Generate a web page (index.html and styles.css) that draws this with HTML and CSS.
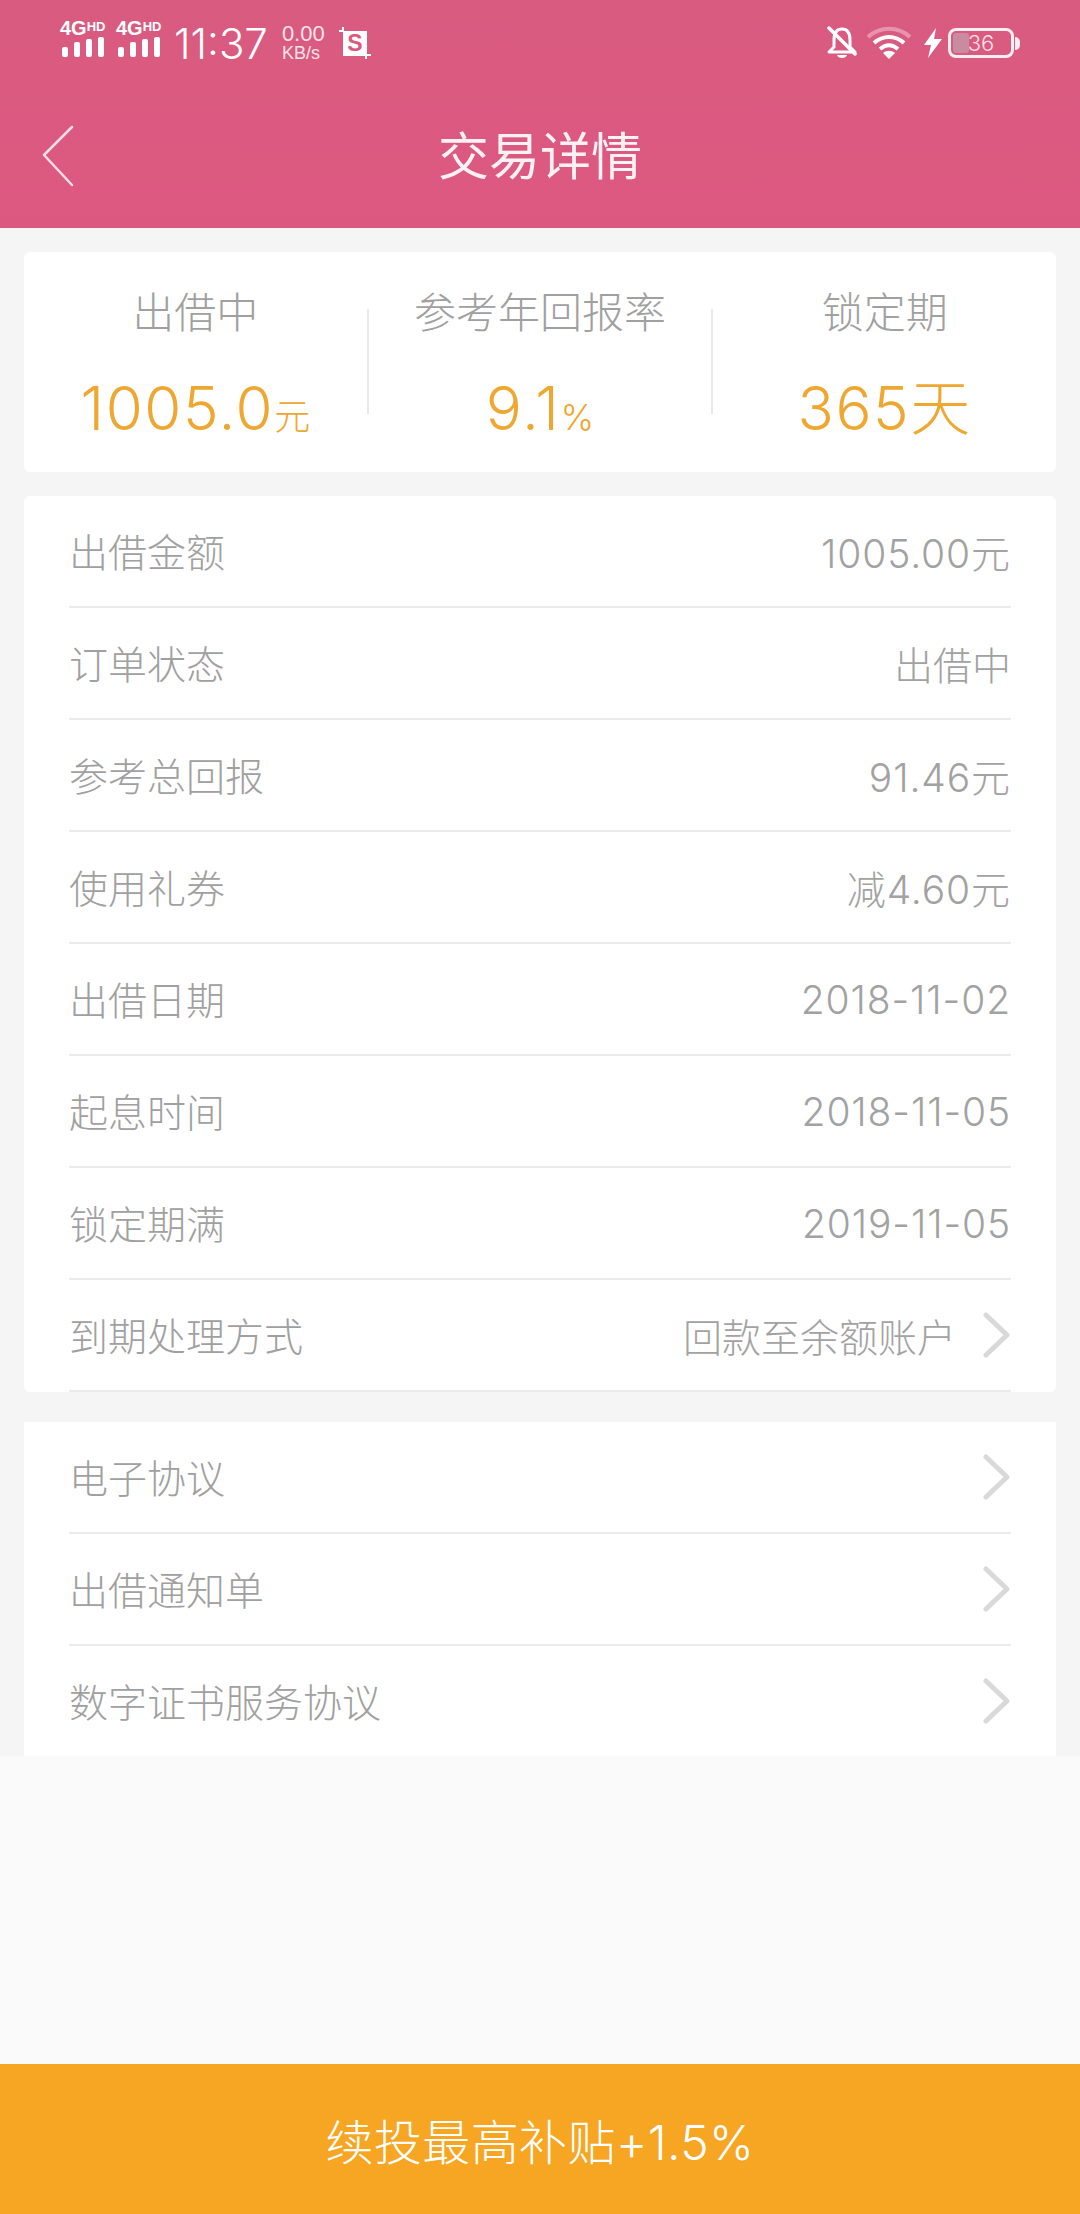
FILE: index.html
```html
<!DOCTYPE html>
<html lang="zh-CN">
<head>
  <meta charset="UTF-8" />
  <meta name="viewport" content="width=device-width, initial-scale=1.0" />
  <title>交易详情</title>
  <link rel="stylesheet" href="styles.css">
</head>
<body>
  <div class="page">
    <header class="header">
      <div class="status-bar">
        <div class="status-left">
          <div class="signal">
            <div class="signal-label">4G<span>HD</span></div>
            <div class="signal-bars"><i class="b1"></i><i class="b2"></i><i class="b3"></i><i class="b4"></i></div>
          </div>
          <div class="signal">
            <div class="signal-label">4G<span>HD</span></div>
            <div class="signal-bars"><i class="b1"></i><i class="b2"></i><i class="b3"></i><i class="b4"></i></div>
          </div>
          <div class="clock">11:37</div>
          <div class="speed"><div>0.00</div><div class="speed-unit">KB/s</div></div>
          <div class="shot-icon">
            <svg width="32" height="34" viewBox="0 0 32 34">
              <path d="M4 1 L4 5 L0 5" fill="none" stroke="#fff" stroke-width="2"/>
              <path d="M27 29 L32 29 M27 29 L27 33" fill="none" stroke="#fff" stroke-width="2"/>
              <rect x="4" y="5" width="24" height="25" fill="#fff"/>
              <text x="16" y="25" class="shot-letter">S</text>
            </svg>
          </div>
        </div>
        <div class="status-right">
          <svg class="bell" width="32" height="34" viewBox="0 0 32 34">
            <path d="M16 3 C9 3 8 9 8 14 L8 21 L3 26 L29 26 L24 21 L24 14 C24 9 23 3 16 3 Z" fill="none" stroke="#fff" stroke-width="3" stroke-linejoin="round"/>
            <path d="M11 29 C12 33 20 33 21 29 Z" fill="#fff"/>
            <path d="M3 2 L29 28" stroke="#fff" stroke-width="3.5" stroke-linecap="round"/>
          </svg>
          <svg class="wifi" width="46" height="34" viewBox="0 0 46 34">
            <path d="M2 11 C14 0 32 0 44 11" fill="none" stroke="#fff" stroke-opacity=".35" stroke-width="4"/>
            <path d="M8 17 C17 9 29 9 38 17" fill="none" stroke="#fff" stroke-width="4"/>
            <path d="M14 23 C20 18 26 18 32 23" fill="none" stroke="#fff" stroke-width="4"/>
            <path d="M17 27 C21 24 25 24 29 27 L23 33 Z" fill="#fff"/>
          </svg>
          <svg class="bolt" width="20" height="30" viewBox="0 0 20 30">
            <path d="M13 0 L1 17 L8 17 L5 30 L19 11 L11 11 Z" fill="#fff"/>
          </svg>
          <div class="battery">
            <div class="battery-body">
              <div class="battery-level"></div>
              <span>36</span>
            </div>
            <div class="battery-tip"></div>
          </div>
        </div>
      </div>
      <div class="nav-bar">
        <svg class="back" width="34" height="62" viewBox="0 0 34 62">
          <path d="M31 2 L3 30 L31 60" fill="none" stroke="#f8dfe6" stroke-width="2.5" stroke-linecap="round" stroke-linejoin="round"/>
        </svg>
        <h1 class="nav-title">交易详情</h1>
      </div>
    </header>

    <main class="content">
      <section class="card stats">
        <div class="stat">
          <div class="stat-label">出借中</div>
          <div class="stat-value">1005.0<small>元</small></div>
        </div>
        <div class="stat-sep"></div>
        <div class="stat">
          <div class="stat-label">参考年回报率</div>
          <div class="stat-value">9.1<small>%</small></div>
        </div>
        <div class="stat-sep"></div>
        <div class="stat">
          <div class="stat-label">锁定期</div>
          <div class="stat-value">365天</div>
        </div>
      </section>

      <section class="card list">
        <div class="row"><span class="row-label">出借金额</span><span class="row-value num">1005.00元</span></div>
        <div class="row"><span class="row-label">订单状态</span><span class="row-value">出借中</span></div>
        <div class="row"><span class="row-label">参考总回报</span><span class="row-value num">91.46元</span></div>
        <div class="row"><span class="row-label">使用礼券</span><span class="row-value num">减4.60元</span></div>
        <div class="row"><span class="row-label">出借日期</span><span class="row-value num">2018-11-02</span></div>
        <div class="row"><span class="row-label">起息时间</span><span class="row-value num">2018-11-05</span></div>
        <div class="row"><span class="row-label">锁定期满</span><span class="row-value num">2019-11-05</span></div>
        <div class="row">
          <span class="row-label">到期处理方式</span>
          <span class="row-value with-arrow">回款至余额账户
            <svg class="arrow" width="28" height="46" viewBox="0 0 28 46"><path d="M3 3 L24 23 L3 43" fill="none" stroke="#d9d9d9" stroke-width="5" stroke-linecap="round" stroke-linejoin="round"/></svg>
          </span>
        </div>
      </section>

      <section class="card list links">
        <div class="row"><span class="row-label">电子协议</span>
          <svg class="arrow" width="28" height="46" viewBox="0 0 28 46"><path d="M3 3 L24 23 L3 43" fill="none" stroke="#d9d9d9" stroke-width="5" stroke-linecap="round" stroke-linejoin="round"/></svg>
        </div>
        <div class="row"><span class="row-label">出借通知单</span>
          <svg class="arrow" width="28" height="46" viewBox="0 0 28 46"><path d="M3 3 L24 23 L3 43" fill="none" stroke="#d9d9d9" stroke-width="5" stroke-linecap="round" stroke-linejoin="round"/></svg>
        </div>
        <div class="row"><span class="row-label">数字证书服务协议</span>
          <svg class="arrow" width="28" height="46" viewBox="0 0 28 46"><path d="M3 3 L24 23 L3 43" fill="none" stroke="#d9d9d9" stroke-width="5" stroke-linecap="round" stroke-linejoin="round"/></svg>
        </div>
      </section>
    </main>

    <div class="spacer"></div>
    <footer class="footer">续投最高补贴+1.5%</footer>
  </div>
</body>
</html>
```

FILE: styles.css
```css
* {
  box-sizing: border-box;
}
body {
  margin: 0;
  font-family: Inter, "Noto Sans CJK SC", sans-serif;
  font-weight: 300;
  background: #fafafa;
}
.page {
  display: flex;
  flex-direction: column;
  height: 2214px;
}

/* header */
.header {
  height: 228px;
  background: linear-gradient(#d95b80, #dd5880);
  color: #fff;
}
.status-bar {
  display: flex;
  justify-content: space-between;
  align-items: center;
  height: 78px;
  padding: 8px 60px 0 62px;
}
.status-left, .status-right {
  display: flex;
  align-items: center;
}
.signal {
  width: 44px;
  margin-right: 12px;
  margin-bottom: 10px;
}
.signal-label {
  font-family: "Liberation Sans", sans-serif;
  font-weight: 700;
  font-size: 20px;
  line-height: 16px;
  white-space: nowrap;
  margin-left: -2px;
}
.signal-label span {
  font-size: 13px;
  vertical-align: 4px;
}
.signal-bars {
  display: flex;
  align-items: flex-end;
  gap: 6px;
  height: 20px;
  margin-top: 1px;
}
.signal-bars i {
  display: block;
  width: 6px;
  background: #fff;
  border-radius: 2px;
}
.b1 { height: 10px; }
.b2 { height: 15px; }
.b3 { height: 18px; }
.b4 { height: 20px; }
.clock {
  font-size: 42px;
}
.speed {
  font-family: "Liberation Sans", sans-serif;
  font-weight: 400;
  margin-left: 14px;
  font-size: 22px;
  line-height: 20px;
  color: #fbe3ea;
}
.speed-unit {
  font-size: 18px;
  line-height: 18px;
}
.shot-icon {
  display: flex;
  margin-left: 14px;
}
.shot-letter {
  font-family: "Liberation Sans", sans-serif;
  font-weight: 700;
  font-size: 23px;
  fill: #dc5a80;
  text-anchor: middle;
}
.bell {
  margin-right: 8px;
}
.wifi {
  margin-right: 11px;
}
.bolt {
  margin-right: 5px;
}
.battery {
  display: flex;
  align-items: center;
}
.battery-body {
  position: relative;
  display: flex;
  justify-content: center;
  align-items: center;
  width: 66px;
  height: 30px;
  border: 3px solid #fbeef2;
  border-radius: 8px;
  font-size: 22px;
  color: #fbe3ea;
  overflow: hidden;
}
.battery-level {
  position: absolute;
  left: 2px;
  top: 2px;
  bottom: 2px;
  width: 16px;
  background: #c88ba0;
  border-radius: 3px;
}
.battery-body span {
  position: relative;
}
.battery-tip {
  width: 5px;
  height: 13px;
  margin-left: 1px;
  background: #fbeef2;
  border-radius: 0 5px 5px 0;
}
.nav-bar {
  position: relative;
  display: flex;
  justify-content: center;
  align-items: center;
  height: 150px;
}
.back {
  position: absolute;
  left: 41px;
  top: 47px;
}
.nav-title {
  margin: 0;
  font-family: "Noto Sans CJK SC", sans-serif;
  font-size: 51px;
  font-weight: 400;
  color: #fdf1f4;
}

/* cards */
.content {
  padding: 24px 24px 0;
  background: #f5f5f5;
}
.card {
  background: #fff;
  border-radius: 6px;
}
.stats {
  display: flex;
  align-items: flex-start;
  height: 220px;
  margin-bottom: 24px;
}
.stat {
  flex: 1;
  padding-top: 28px;
  text-align: center;
}
.stat-label {
  font-family: "Noto Sans CJK SC", sans-serif;
  font-size: 42px;
  line-height: 60px;
  color: #a0a0a0;
  margin-bottom: 35px;
}
.stat-value {
  height: 66px;
  font-size: 60px;
  line-height: 66px;
  letter-spacing: 1.6px;
  color: #eea730;
}
.stat-value small {
  font-size: 36px;
  letter-spacing: 0;
}
.stat-sep {
  width: 2px;
  height: 105px;
  margin-top: 57px;
  background: #e9e9e9;
}
.list {
  padding: 0 45px;
  margin-bottom: 30px;
}
.row {
  display: flex;
  justify-content: space-between;
  align-items: center;
  height: 112px;
  border-bottom: 2px solid #ebebeb;
  font-size: 39px;
  color: #a0a0a0;
}
.row-label {
  font-family: "Noto Sans CJK SC", sans-serif;
  margin-top: -3px;
}
.row-value {
  color: #a2a2a2;
}
.num {
  letter-spacing: 0.9px;
}
.with-arrow {
  display: flex;
  align-items: center;
  gap: 27px;
}
.arrow {
  flex: none;
}
.links {
  margin-bottom: 0;
  border-radius: 0;
}
.links .row:last-child {
  height: 110px;
  border-bottom: none;
}

/* bottom */
.spacer {
  flex: 1;
}
.footer {
  display: flex;
  justify-content: center;
  align-items: center;
  height: 150px;
  background: #f6a623;
  color: #fff;
  font-size: 48px;
  letter-spacing: 0.4px;
}
```
